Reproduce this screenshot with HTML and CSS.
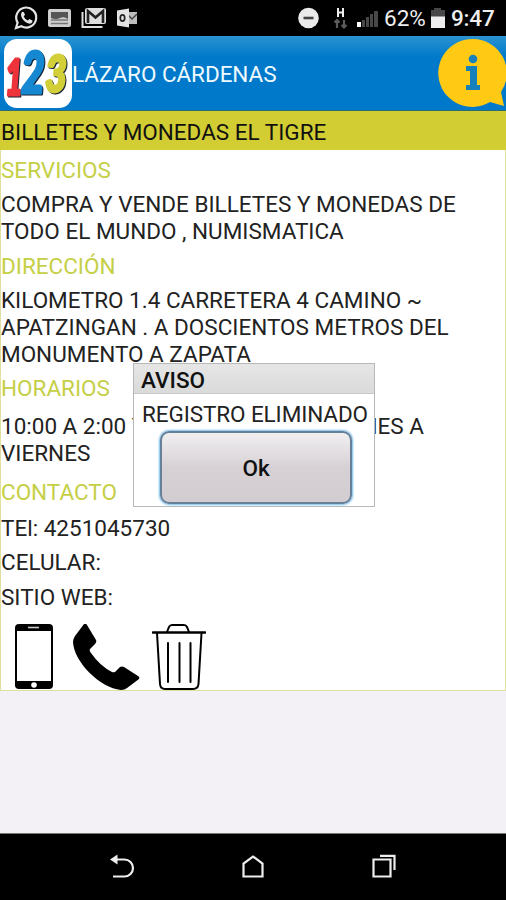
FILE: index.html
```
<!DOCTYPE html>
<html lang="es">
<head>
    <meta charset="UTF-8">
    <meta name="viewport" content="width=device-width, initial-scale=1.0">
    <title>Lázaro Cárdenas</title>
    <link rel="stylesheet" href="styles.css">
</head>
<body>
    <!-- Status bar -->
    <div class="status-bar">
        <svg class="status-icons" width="150" height="36" viewBox="0 0 150 36">
            <path d="M16 28l1.6-5.4a10 10 0 1 1 3.8 3.7z" fill="none" stroke="#e4e4e4" stroke-width="2.2"/>
            <path d="M21.5 12.5c1-1 2-1 2.500 0l1 2.300-1.300 1.700c1 2 2.300 3.200 4.200 4.100l1.600-1.500 2.500 1.200c1 .5.300 2.300-.6 2.900-4 2.500-12.500-5.500-9.900-10.700z" fill="#e4e4e4"/>
            <rect x="48" y="9" width="23" height="18" rx="2" fill="#cfcfcf"/>
            <path d="M51 12h17v7q-4-3-8-1t-9 0z" fill="#555"/>
            <path d="M51 20h17M51 23.500h17" stroke="#777" stroke-width="1.300"/>
            <path d="M82.500 12v15h20" fill="none" stroke="#dedede" stroke-width="2"/>
            <rect x="85" y="8" width="21" height="16" rx="2" fill="#dedede"/>
            <path d="M88 23V11l7.500 6.500L103 11v12" fill="none" stroke="#222" stroke-width="2.600"/>
            <path d="M127 12h10v12h-10z" fill="#bdbdbd"/>
            <path d="M127 14l5 5 5-5" fill="none" stroke="#444" stroke-width="1.500"/>
            <path d="M117 10.500l12-2v19l-12-2z" fill="#e4e4e4"/>
            <ellipse cx="122.500" cy="18" rx="2.200" ry="3.200" fill="none" stroke="#222" stroke-width="1.700"/>
        </svg>
        <svg width="82" height="36" viewBox="297 0 82 36">
            <circle cx="308.500" cy="18" r="10.300" fill="#ebebeb"/>
            <path d="M303.500 18h10" stroke="#444" stroke-width="2.600"/>
            <path d="M338 8v9M343 8v9M338 12.500h5" stroke="#eee" stroke-width="2" fill="none"/>
            <path d="M337 28v-7M334.500 22.500L337 20l2.500 2.500M344 20v7M341.500 25l2.500 2.500 2.500-2.500" stroke="#5c5c5c" stroke-width="2.200" fill="none"/>
            <path d="M357 22h4v5h-4z" fill="#fff"/>
            <path d="M362 20h3v7h-3zM366 17h3v10h-3zM370 14h3v13h-3zM374 11h4v16h-4z" fill="#484848"/>
        </svg>
        <span class="battery-text">62%</span>
        <svg class="battery" width="16" height="36" viewBox="0 0 16 36">
            <path d="M4 8h7v2h4v7H1v-7h3z" fill="#484848"/>
            <path d="M1 16.500h14V28H1z" fill="#eee"/>
        </svg>
        <span class="clock">9:47</span>
    </div>

    <!-- App header -->
    <div class="header">
        <svg class="logo" width="68" height="69" viewBox="0 0 68 69">
            <rect width="68" height="69" rx="13" fill="#fff"/>
            <g class="logo-digits">
                <text x="1" y="56" font-size="50" textLength="18" lengthAdjust="spacingAndGlyphs" fill="#ee333b" stroke="#ee333b">1</text>
                <text x="17" y="54" font-size="57" textLength="24" lengthAdjust="spacingAndGlyphs" fill="#1688d2" stroke="#1688d2">2</text>
                <text x="41" y="53" font-size="51" textLength="22" lengthAdjust="spacingAndGlyphs" fill="#d2cf38" stroke="#d2cf38">3</text>
            </g>
        </svg>
        <h1>LÁZARO CÁRDENAS</h1>
        <svg class="info" width="68" height="70" viewBox="0 0 68 70">
            <path d="M35 1a34 34 0 1 0 17 63l14 4-3-14A34 34 0 0 0 35 1z" fill="#ffc914"/>
            <circle cx="35" cy="21" r="4.300" fill="#1680bb"/>
            <path d="M28 28h11v19h3v5H28v-5h4V33h-4z" fill="#1680bb"/>
        </svg>
    </div>

    <div class="business-name">BILLETES Y MONEDAS EL TIGRE</div>

    <!-- Record details -->
    <div class="details">
        <h2>SERVICIOS</h2>
        <p>COMPRA Y VENDE BILLETES Y MONEDAS DE<br>TODO EL MUNDO , NUMISMATICA</p>
        <h2 class="direccion">DIRECCIÓN</h2>
        <p>KILOMETRO 1.4 CARRETERA 4 CAMINO ~<br>APATZINGAN . A DOSCIENTOS METROS DEL<br>MONUMENTO A ZAPATA</p>
        <h2>HORARIOS</h2>
        <p class="horarios">10:00 A 2:00 Y DE 4:00 A 8:00 DE LUNES A<br>VIERNES</p>
        <h2 class="contacto">CONTACTO</h2>
        <p class="tel">TEl: 4251045730</p>
        <p>CELULAR:</p>
        <p class="web">SITIO WEB:</p>
        <div class="actions">
            <svg width="40" height="66" viewBox="0 0 40 66">
                <rect width="38" height="65" rx="4" x="1" fill="#000"/>
                <path d="M3 7h34v50H3z" fill="#fff"/>
                <path d="M14 3.500h11" stroke="#ccc" stroke-width="1.600"/>
                <circle cx="20" cy="61" r="2.800" fill="#fff"/>
            </svg>
            <svg width="68" height="66" viewBox="0 0 68 66">
                <path d="M12 0q2-1 3 1l9 15q1 2-1 4l-5 5q-1 2 1 4 9 13 21 19 3 1 4-1l4-4q2-1 4 0l14 9q2 1 1 3L55 64q-2 2-6 2C28 64 2 38 1 18q0-3 2-6z" fill="#000"/>
            </svg>
            <svg width="54" height="66" viewBox="0 0 54 66" fill="none" stroke="#000" stroke-width="2" stroke-linecap="round">
                <path d="M1 8.500h52" stroke-width="2.600"/>
                <path d="M15 8l2-5q1-2 3-2h12q2 0 3 2l2 5"/>
                <path d="M5 9l3 51q.5 5 5 5h28q5 0 5.500-5l3-51M16 19v39M27.500 19v39M38.500 19v39"/>
            </svg>
        </div>
    </div>

    <!-- Alert shown after the record is deleted -->
    <div class="dialog">
        <div class="dialog-title">AVISO</div>
        <div class="dialog-message">REGISTRO ELIMINADO</div>
        <button class="ok-button">Ok</button>
    </div>

    <!-- Android navigation -->
    <div class="nav-bar">
        <svg width="26" height="26" viewBox="0 0 26 26">
            <path d="M6 5.500h9.500a8 8 0 0 1 0 17H4" fill="none" stroke="#eee" stroke-width="2.200"/>
            <path d="M1 5.500L8.500.500v10z" fill="#eee"/>
        </svg>
        <svg width="24" height="26" viewBox="0 0 24 26">
            <path d="M2.500 22.500V9.500L12 2.500l9.500 7v13z" fill="none" stroke="#eee" stroke-width="2.200"/>
        </svg>
        <svg width="26" height="26" viewBox="0 0 26 26">
            <path d="M2.500 5.500h17v17h-17zM9 1.800h14.500V16" fill="none" stroke="#eee" stroke-width="2.200"/>
        </svg>
    </div>
</body>
</html>
```

FILE: styles.css
```
* {
    box-sizing: border-box;
}

body {
    margin: 0;
    height: 900px;
    display: flex;
    flex-direction: column;
    background-color: #f3f1f5;
    font-family: Roboto, sans-serif;
    font-size: 22.5px;
    line-height: 27px;
    color: #111;
    overflow: hidden;
}

svg {
    display: block;
    flex-shrink: 0;
}

h1, h2, p {
    margin: 0;
    font-size: inherit;
    font-weight: normal;
    white-space: nowrap;
}

/* Status bar */
.status-bar {
    display: flex;
    align-items: center;
    height: 36px;
    padding-right: 11px;
    background-color: #000;
    color: #eee;
}

.status-icons {
    margin-right: auto;
}

.battery-text {
    width: 42px;
    margin-left: 5px;
}

.battery {
    margin: 0 5px 0 4px;
}

.clock {
    width: 44px;
    font-weight: 500;
    letter-spacing: -0.2px;
}

/* Header */
.header {
    display: flex;
    align-items: center;
    height: 75px;
    padding: 0 0 0 4px;
    background: linear-gradient(#2b94d2, #0079ca 28%, #0079ca);
    border-bottom: 1px solid #2a6c72;
    color: #eefaff;
}

.header h1 {
    flex: 1;
    padding-top: 2px;
    letter-spacing: -0.05px;
}

.logo-digits {
    font-family: Lato, sans-serif;
    font-weight: 900;
    font-style: italic;
    stroke-width: 3px;
    stroke-linejoin: round;
    filter: drop-shadow(1px 1px 0 #172435);
}

.business-name {
    height: 39px;
    padding: 8px 2px 0 1px;
    background-color: #d2cd33;
    white-space: nowrap;
}

/* Details */
.details {
    height: 541px;
    padding: 7px 0 0;
    background-color: #fff;
    border: 1px solid #dfe0a0;
    border-top: none;
}

.details h2 {
    margin: 0 0 7px;
    color: #c5cf45;
}

.details p {
    margin-bottom: 7px;
    color: #222;
}

.details .direccion {
    margin-top: 8px;
}

.details .horarios {
    margin: 11px 0 12px;
}

.details .contacto {
    margin-bottom: 9px;
}

.details .web {
    margin: 8px 0 13px;
}

.actions {
    display: flex;
    padding-left: 13px;
}

.actions svg:nth-child(2) {
    margin: 0 12px 0 18px;
}

/* Dialog */
.dialog {
    position: absolute;
    left: 133px;
    top: 363px;
    width: 242px;
    height: 144px;
    background-color: #fff;
    border: 1px solid #b8b8b8;
}

.dialog-title {
    height: 30px;
    padding: 3px 7px;
    background: linear-gradient(#e6e6e6, #dadada);
    border-bottom: 1px solid #c8c8c8;
    font-weight: 500;
}

.dialog-message {
    padding: 7px 8px 3px;
    color: #222;
    letter-spacing: -0.1px;
    white-space: nowrap;
}

.ok-button {
    display: block;
    width: 192px;
    height: 73px;
    margin-left: 26px;
    background: linear-gradient(#f0eff0, #d7d1d6 50%, #d3cdd2);
    border: 2px solid #66809a;
    border-radius: 9px;
    box-shadow: 0 0 2px 1px #75bce8;
    color: #111;
    font-family: inherit;
    font-size: 22.5px;
    font-weight: 500;
}

/* Navigation bar */
.nav-bar {
    display: flex;
    align-items: center;
    justify-content: space-between;
    height: 67px;
    margin-top: auto;
    padding: 0 109px;
    background-color: #000;
    border-top: 1px solid #777;
}
```
